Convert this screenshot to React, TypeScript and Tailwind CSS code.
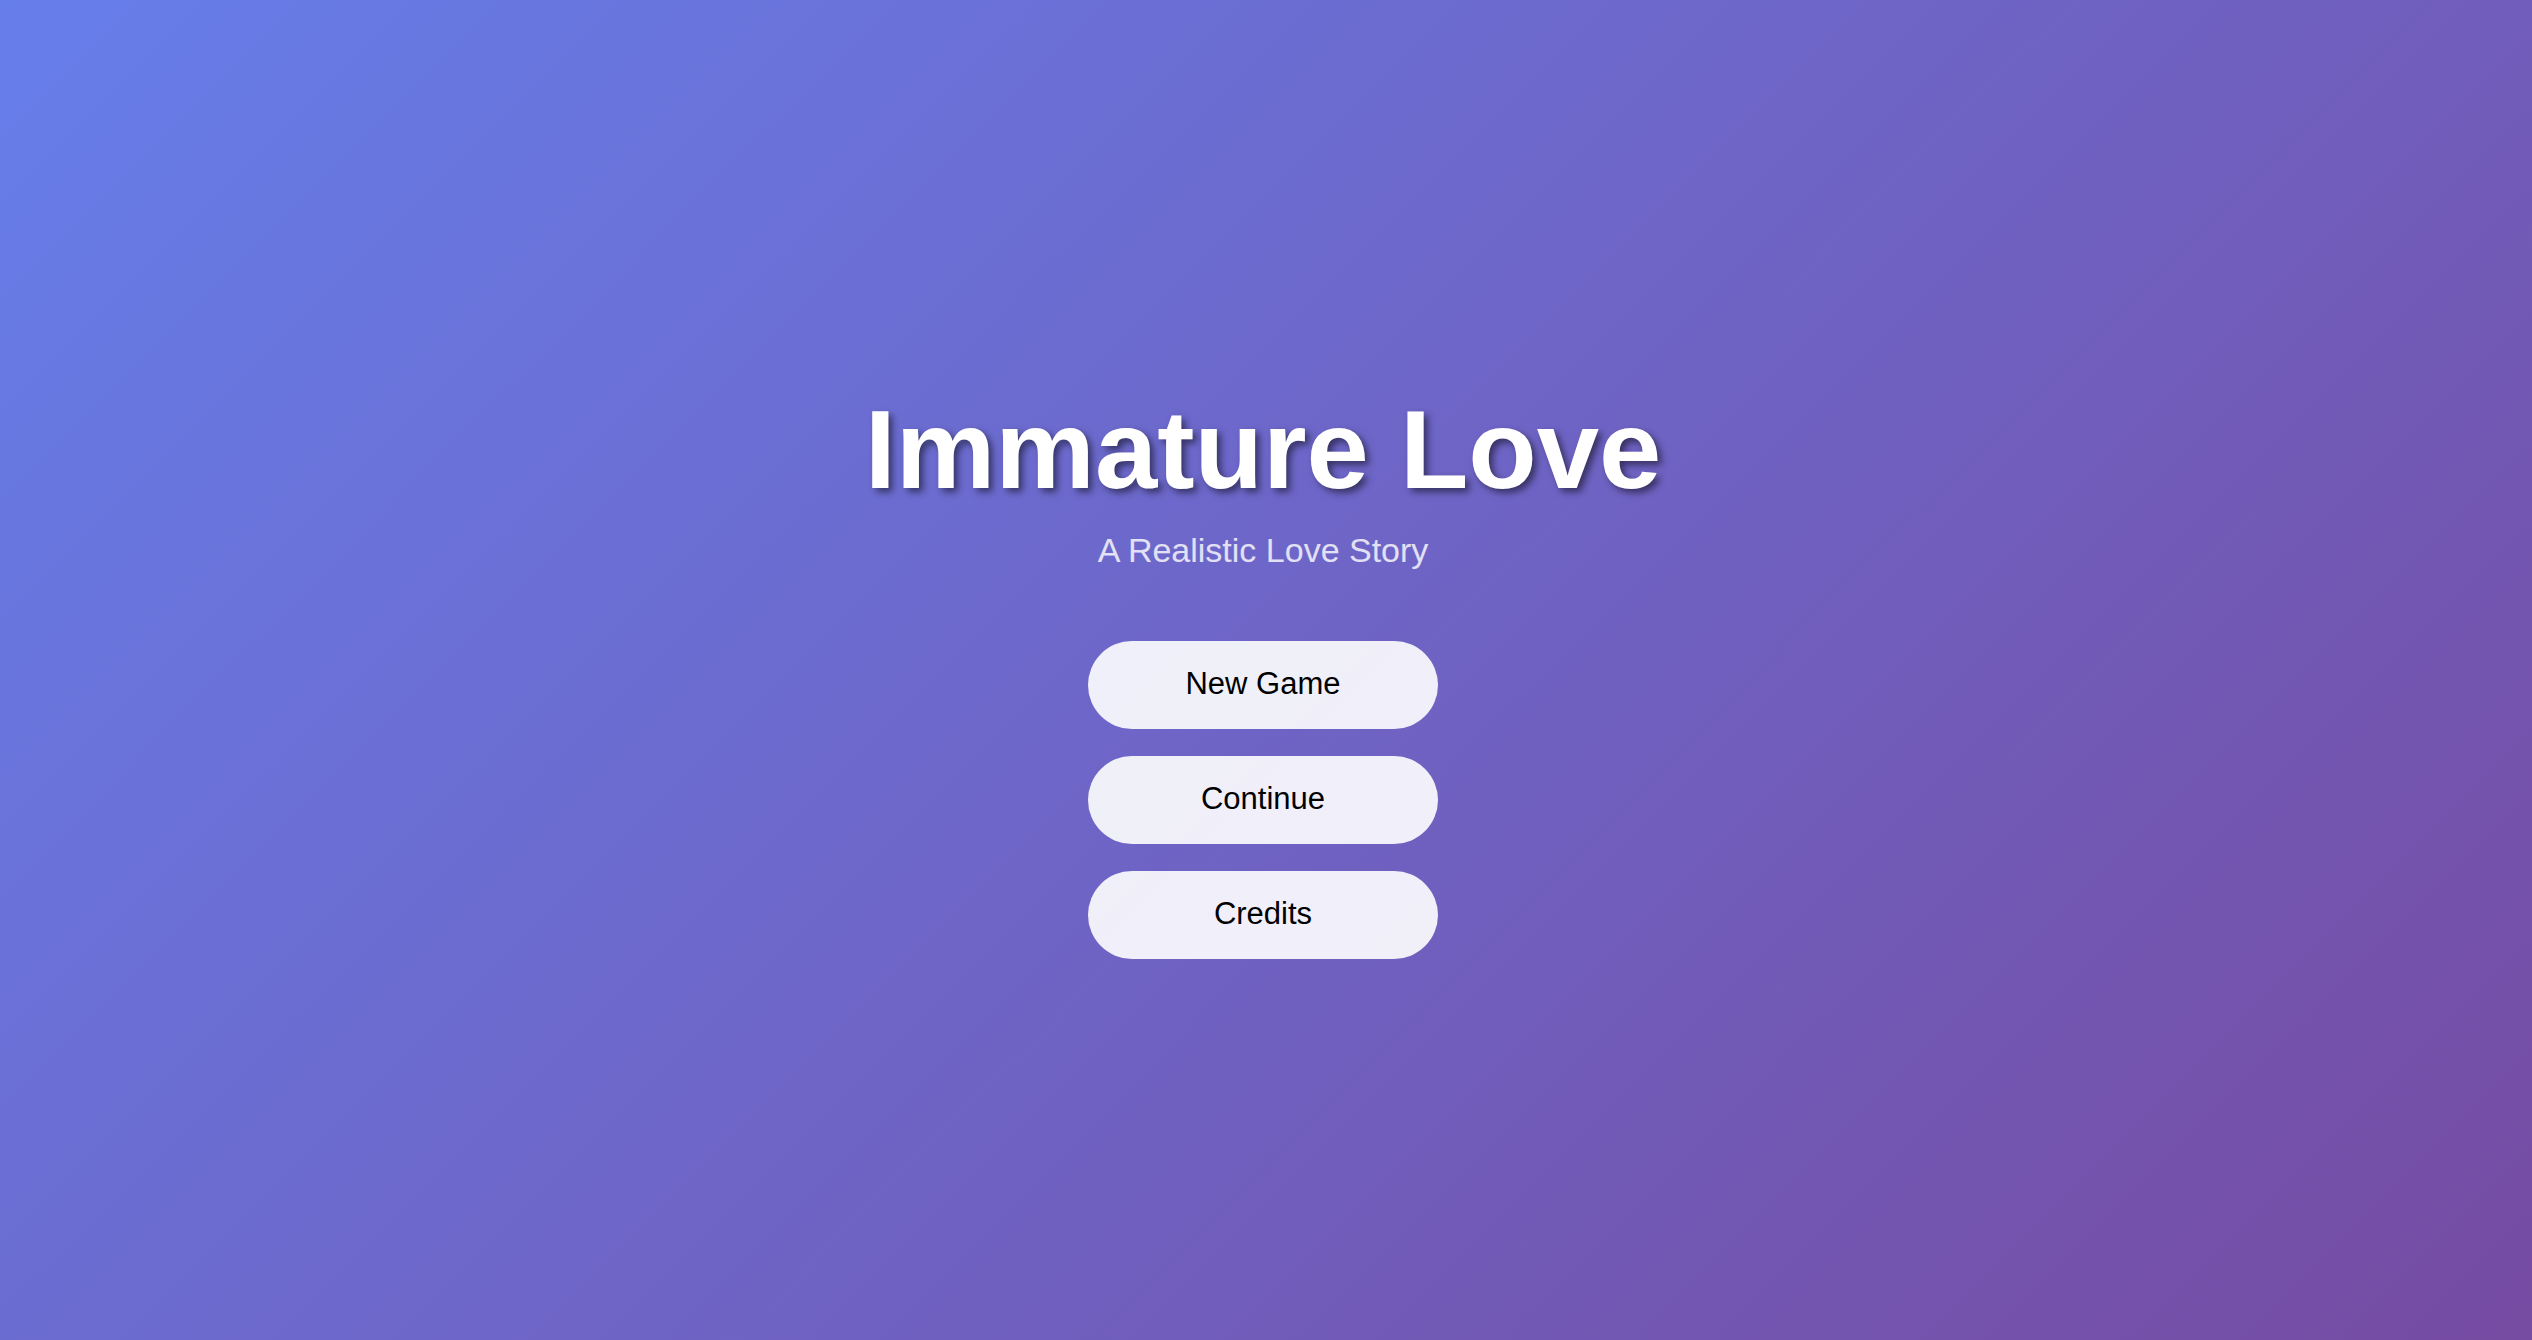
const entries = ['New Game', 'Continue', 'Credits'];

export default function App() {
  return (
    <main className="flex min-h-screen flex-col items-center justify-center bg-[linear-gradient(135deg,#667eea_0%,#764ba2_100%)] pt-1 pr-[6px] font-['Liberation_Sans',Arial,sans-serif]">
      <h1 className="mb-4 text-[112px] leading-[128px] font-bold text-white [text-shadow:4px_4px_7px_rgba(0,0,0,0.5)]">
        Immature Love
      </h1>
      <p className="mb-[71px] text-[34px] leading-[40px] text-white/80">A Realistic Love Story</p>
      <nav className="flex flex-col gap-[27px]" aria-label="Main menu">
        {entries.map((entry) => (
          <button
            key={entry}
            type="button"
            className="h-[88px] w-[350px] cursor-pointer rounded-full bg-white/90 text-[31px] text-black"
          >
            {entry}
          </button>
        ))}
      </nav>
    </main>
  );
}
